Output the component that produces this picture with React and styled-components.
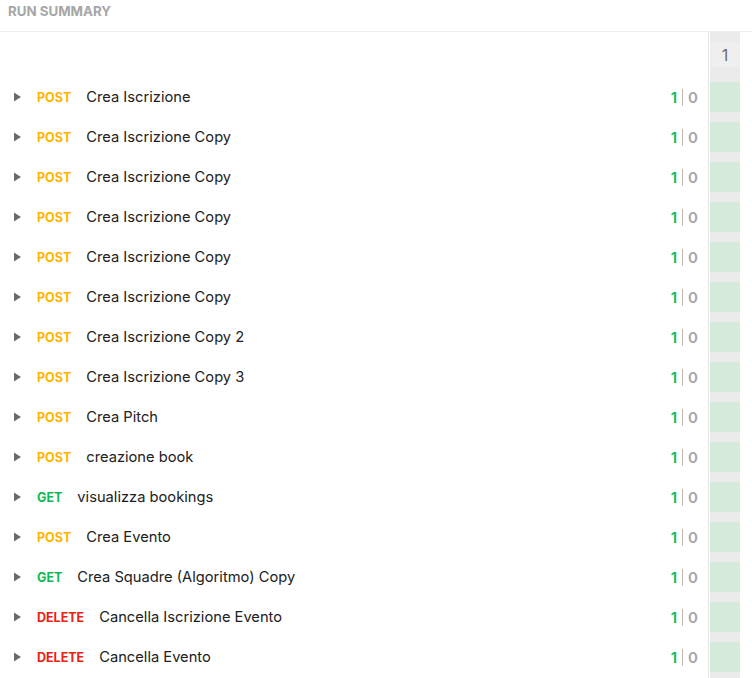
import React from "react";
import styled, { createGlobalStyle } from "styled-components";

const GlobalStyle = createGlobalStyle`
  html, body {
    margin: 0;
    padding: 0;
    background: #ffffff;
    font-family: Inter, "Open Sans", "Liberation Sans", sans-serif;
  }
`;

const requests = [
  { method: "POST", name: "Crea Iscrizione" },
  { method: "POST", name: "Crea Iscrizione Copy" },
  { method: "POST", name: "Crea Iscrizione Copy" },
  { method: "POST", name: "Crea Iscrizione Copy" },
  { method: "POST", name: "Crea Iscrizione Copy" },
  { method: "POST", name: "Crea Iscrizione Copy" },
  { method: "POST", name: "Crea Iscrizione Copy 2" },
  { method: "POST", name: "Crea Iscrizione Copy 3" },
  { method: "POST", name: "Crea Pitch" },
  { method: "POST", name: "creazione book" },
  { method: "GET", name: "visualizza bookings" },
  { method: "POST", name: "Crea Evento" },
  { method: "GET", name: "Crea Squadre (Algoritmo) Copy" },
  { method: "DELETE", name: "Cancella Iscrizione Evento" },
  { method: "DELETE", name: "Cancella Evento" },
];

const methodColors = {
  GET: "#0cbb52",
  POST: "#ffb400",
  DELETE: "#eb2013",
};

const Page = styled.div`
  width: 752px;
  height: 678px;
  overflow: hidden;
  display: flex;
  flex-direction: column;
`;

const Header = styled.div`
  height: 32px;
  flex-shrink: 0;
  display: flex;
  align-items: flex-start;
  padding: 3px 8px 0;
  box-sizing: border-box;
  border-bottom: 1px solid #ededed;
  font-size: 13.3px;
  font-weight: 700;
  color: #a6a6a6;
`;

const Body = styled.div`
  flex: 1;
  display: flex;
  padding-right: 12px;
`;

const List = styled.div`
  flex: 1;
  border-right: 1px solid #e6e6e6;
`;

const Spacer = styled.div`
  height: 45px;
`;

const Row = styled.div`
  height: 40px;
  display: flex;
  align-items: center;
  padding: 0 10px 0 14px;
`;

const Caret = styled.svg`
  width: 7px;
  height: 10px;
  flex-shrink: 0;
  margin-right: 16px;
`;

const Method = styled.span`
  font-size: 12.5px;
  font-weight: 700;
  color: ${(p) => p.$color};
  margin-right: 15px;
`;

const Name = styled.span`
  flex: 1;
  font-size: 14.7px;
  color: #212121;
  white-space: nowrap;
`;

const Counts = styled.div`
  display: flex;
  align-items: center;
  gap: 5px;
  font-size: 15px;
  font-weight: 600;
`;

const Passed = styled.span`
  color: #0cbb52;
`;

const Failed = styled.span`
  color: #a6a6a6;
`;

const Divider = styled.span`
  width: 1px;
  height: 17px;
  background: #c7b9a8;
`;

const RunColumn = styled.div`
  width: 30px;
  margin-left: 1px;
  background: #ebebeb;
  display: flex;
  flex-direction: column;
`;

const RunLabel = styled.div`
  height: 25px;
  margin: 10px 0;
  border-radius: 4px;
  background: #efefef;
  display: flex;
  align-items: center;
  justify-content: center;
  font-size: 16px;
  color: #6b6b6b;
`;

const Cell = styled.div`
  height: 30px;
  margin: 5px 0;
  background: ${(p) => (p.$passed ? "#d5eadb" : "#f7d6d4")};
`;

const Triangle = () => (
  <Caret viewBox="0 0 7 10">
    <path d="M0 0.5 L7 5 L0 9.5 Z" fill="#6b6b6b" />
  </Caret>
);

export default function App() {
  return (
    <>
      <GlobalStyle />
      <Page>
        <Header>RUN SUMMARY</Header>
        <Body>
          <List>
            <Spacer />
            {requests.map((r, i) => (
              <Row key={i}>
                <Triangle />
                <Method $color={methodColors[r.method]}>{r.method}</Method>
                <Name>{r.name}</Name>
                <Counts>
                  <Passed>1</Passed>
                  <Divider />
                  <Failed>0</Failed>
                </Counts>
              </Row>
            ))}
          </List>
          <RunColumn>
            <RunLabel>1</RunLabel>
            {requests.map((r, i) => (
              <Cell key={i} $passed />
            ))}
          </RunColumn>
        </Body>
      </Page>
    </>
  );
}
